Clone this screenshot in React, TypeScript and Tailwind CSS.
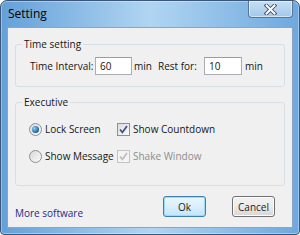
import React from 'react';

const FONT = { fontFamily: '"Open Sans", "Noto Sans", sans-serif' };

function Radio({ checked }: { checked?: boolean }) {
  return (
    <span className="w-[13px] h-[13px] rounded-full border border-[#8e8f8f] bg-gradient-to-br from-[#d8d8d8] to-[#fbfbfb] flex items-center justify-center flex-shrink-0">
      {checked && (
        <span className="w-[7px] h-[7px] rounded-full bg-[radial-gradient(circle_at_35%_35%,#8fd0f5,#1d5f9c_70%,#174a7c)]" />
      )}
    </span>
  );
}

function Check({ disabled }: { disabled?: boolean }) {
  return (
    <span
      className={
        disabled
          ? 'w-[13px] h-[13px] border border-[#c3c3c3] bg-[#f4f4f4] flex items-center justify-center flex-shrink-0'
          : 'w-[13px] h-[13px] border border-[#8e8f8f] bg-gradient-to-br from-[#dcdcdc] to-[#fafafa] flex items-center justify-center flex-shrink-0'
      }
    >
      <svg width="9" height="9" viewBox="0 0 9 9">
        <path d="M1 4.5 L3.4 7.4 L8 1" fill="none" stroke={disabled ? '#bcbcbc' : '#3a4f8d'} strokeWidth="1.7" />
      </svg>
    </span>
  );
}

export default function App() {
  return (
    <div className="w-[300px] h-[235px] bg-white text-[10px] text-[#161616] leading-4 whitespace-nowrap" style={FONT}>
      <div className="w-full h-full rounded-t-[7px] rounded-b-[4px] border border-[#3a5678] bg-gradient-to-r from-[#64a0d8] via-[#b0d5f2] to-[#6ea8de] flex flex-col px-[6px] pb-[6px] shadow-[inset_0_0_0_1px_rgba(255,255,255,0.35)]">
        {/* Title bar */}
        <div className="h-[26px] flex justify-between">
          <span className="self-center pl-[1px] text-[12px] text-black">Setting</span>
          <div className="w-[45px] h-[17px] rounded-b-[4px] border border-t-0 border-[#56779c] bg-gradient-to-b from-[#c6e0f5] to-[#a3c8e9] flex items-center justify-center shadow-[inset_0_0_0_1px_rgba(255,255,255,0.5)]">
            <svg width="13" height="11" viewBox="0 0 13 11">
              <path d="M2.5 1.5 L10.5 9.5 M10.5 1.5 L2.5 9.5" stroke="#3d4d63" strokeWidth="3.8" strokeLinecap="square" />
              <path d="M2.5 1.5 L10.5 9.5 M10.5 1.5 L2.5 9.5" stroke="#ffffff" strokeWidth="2" strokeLinecap="square" />
            </svg>
          </div>
        </div>

        {/* Client area */}
        <div className="flex-1 border border-[#8aa4c1] bg-[#f0f0f0] flex flex-col">
          <fieldset className="mx-[7px] mt-[8px] border border-[#d5dfe5] rounded-[3px] px-0 pt-[5px] pb-[11px] min-w-0">
            <legend className="ml-[6px] px-[2px] leading-4">Time setting</legend>
            <div className="flex items-center pl-[14px] h-[18px]">
              <span className="w-[65px]">Time Interval:</span>
              <span className="w-[37px] h-[18px] bg-white border border-[#abadb3] border-t-[#9a9ca3] pl-[4px] flex items-center">60</span>
              <span className="ml-[2px] w-[24px]">min</span>
              <span className="w-[46px]">Rest for:</span>
              <span className="w-[38px] h-[18px] bg-white border border-[#abadb3] border-t-[#9a9ca3] pl-[4px] flex items-center">10</span>
              <span className="ml-[3px]">min</span>
            </div>
          </fieldset>

          <fieldset className="mx-[7px] mt-[7px] border border-[#d5dfe5] rounded-[3px] px-0 pt-[11px] pb-[21px] min-w-0">
            <legend className="ml-[6px] px-[2px] leading-4">Executive</legend>
            <div className="flex flex-col gap-[11px] pl-[13px]">
              <div className="flex items-center h-4">
                <span className="w-[88px] flex items-center gap-[3px]">
                  <Radio checked />
                  <span>Lock Screen</span>
                </span>
                <span className="flex items-center gap-[3px]">
                  <Check />
                  <span>Show Countdown</span>
                </span>
              </div>
              <div className="flex items-center h-4">
                <span className="w-[88px] flex items-center gap-[3px]">
                  <Radio />
                  <span>Show Message</span>
                </span>
                <span className="flex items-center gap-[3px] text-[#8d8d8d]">
                  <Check disabled />
                  <span>Shake Window</span>
                </span>
              </div>
            </div>
          </fieldset>

          <div className="flex items-start mt-[10px] pl-[7px] pr-[17px]">
            <span className="mt-[9px] text-[#1f2a8a]">More software</span>
            <button className="ml-auto w-[43px] h-[21px] rounded-[3px] border border-[#3c7fb1] bg-gradient-to-b from-[#eaf6fd] via-[#d9f0fc] to-[#bee6fd] shadow-[inset_0_0_0_1px_#9cdaf9] text-[#1b1b1b]">
              Ok
            </button>
            <button className="ml-[26px] w-[43px] h-[21px] rounded-[3px] border border-[#707070] bg-gradient-to-b from-[#f2f2f2] via-[#ebebeb] to-[#d6d6d6] shadow-[inset_0_0_0_1px_#fcfcfc] text-[#1b1b1b]">
              Cancel
            </button>
          </div>
        </div>
      </div>
    </div>
  );
}
